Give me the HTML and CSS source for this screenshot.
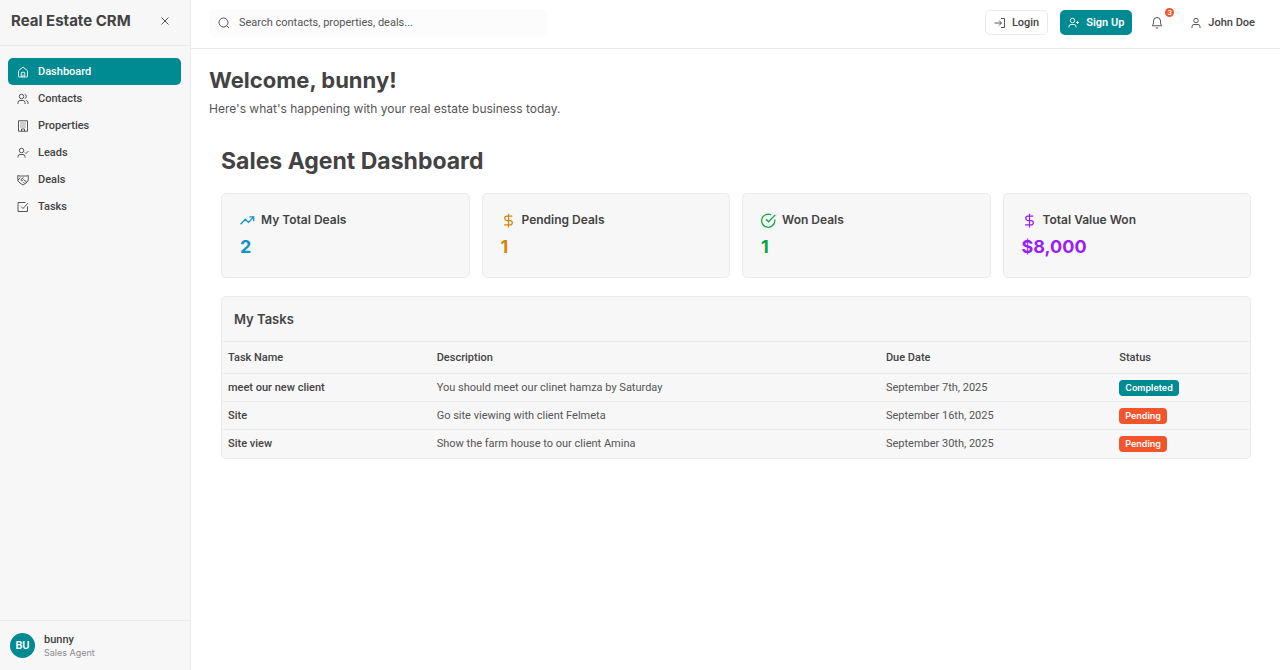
FILE: index.html
```html
<!DOCTYPE html>
<html lang="en">
<head>
<meta charset="utf-8">
<meta name="viewport" content="width=device-width, initial-scale=1">
<title>Real Estate CRM</title>
<link rel="stylesheet" href="styles.css">
</head>
<body>
<div class="app">
  <aside class="sidebar">
    <div class="brand">
      <span class="brand-name">Real Estate CRM</span>
      <button class="icon-button" type="button" aria-label="Close sidebar">
        <svg class="icon" viewBox="0 0 24 24"><path d="M19 5 5 19M5 5l14 14"/></svg>
      </button>
    </div>
    <nav class="nav">
      <a class="nav-link active" href="#"><svg class="icon" viewBox="0 0 24 24"><path d="M3 9.500 12 2l9 7.500V21a1 1 0 0 1-1 1H4a1 1 0 0 1-1-1z"/><path d="M8.500 22v-8a1.500 1.500 0 0 1 1.500-1.500h4a1.500 1.500 0 0 1 1.500 1.500v8M12 17v5"/></svg>Dashboard</a>
      <a class="nav-link" href="#"><svg class="icon" viewBox="0 0 24 24"><circle cx="9" cy="7" r="4.500"/><path d="M2 22v-3a4 4 0 0 1 4-4h6a4 4 0 0 1 4 4v3M15.500 2.700a4.500 4.500 0 0 1 0 8.600M18.500 15a4 4 0 0 1 3.500 4v3"/></svg>Contacts</a>
      <a class="nav-link" href="#"><svg class="icon" viewBox="0 0 24 24"><path d="M3 1.500h18v21H3zM9 22v-4h6v4M8 5v2M12 5v2M16 5v2M8 9v2M12 9v2M16 9v2M8 13v2M12 13v2M16 13v2"/></svg>Properties</a>
      <a class="nav-link" href="#"><svg class="icon" viewBox="0 0 24 24"><circle cx="9" cy="7" r="4.500"/><path d="M2 21v-2a4 4 0 0 1 4-4h6a4 4 0 0 1 4 4v2M16 11l2 2 5-5"/></svg>Leads</a>
      <a class="nav-link" href="#"><svg class="icon" viewBox="0 0 24 24"><path d="M12 22 4 16.500A7 7 0 0 1 1.500 11V3c3 1.500 6 1 10.500 1s7.500.500 10.500-1v8a7 7 0 0 1-2.500 5.500z"/><path d="M13 7 8.500 10.500a1.800 1.800 0 0 0 2.600 2.500l2-1.800 6.400 5M15.500 19l-3-3M2 12l5-5"/></svg>Deals</a>
      <a class="nav-link" href="#"><svg class="icon" viewBox="0 0 24 24"><path d="M21 11v10H2V3h15M8 11l4 4L22 4"/></svg>Tasks</a>
    </nav>
    <div class="account">
      <span class="avatar">BU</span>
      <div>
        <div class="account-name">bunny</div>
        <div class="account-role">Sales Agent</div>
      </div>
    </div>
  </aside>
  <div class="page">
    <header class="topbar">
      <label class="search">
        <svg class="icon" viewBox="0 0 24 24"><circle cx="11" cy="11" r="9"/><path d="m22 22-4.600-4.600"/></svg>
        <input class="search-input" type="text" aria-label="Search" placeholder="Search contacts, properties, deals...">
      </label>
      <div class="actions">
        <button class="button outline" type="button"><svg class="icon" viewBox="0 0 24 24"><path d="M14 3h7v18h-7M10 17l5-5-5-5M15 12H1"/></svg>Login</button>
        <button class="button primary" type="button"><svg class="icon" viewBox="0 0 24 24"><circle cx="9" cy="7" r="4.500"/><path d="M2 21v-2a4 4 0 0 1 4-4h6a4 4 0 0 1 4 4v2M19 8v6M16 11h6"/></svg>Sign Up</button>
        <button class="bell" type="button" aria-label="Notifications"><svg class="icon" viewBox="0 0 24 24"><path d="M2.500 17.500c1.500-1.400 2.500-3.400 2.500-9.500a7 7 0 0 1 14 0c0 6.100 1 8.100 2.500 9.500zM9.500 22h5"/></svg><span class="count">3</span></button>
        <button class="button profile" type="button"><svg class="icon" viewBox="0 0 24 24"><circle cx="12" cy="7" r="4.500"/><path d="M4 22v-3a4 4 0 0 1 4-4h8a4 4 0 0 1 4 4v3"/></svg>John Doe</button>
      </div>
    </header>
    <main class="content">
      <h1 class="title">Welcome, bunny!</h1>
      <p class="intro">Here's what's happening with your real estate business today.</p>
      <section class="dashboard">
        <h2 class="title section-title">Sales Agent Dashboard</h2>
        <div class="stats">
          <article class="card blue">
            <h3 class="stat-label"><svg class="icon" viewBox="0 0 24 24"><path d="M22 6l-8.500 9-5-5L1 18M15 6h7v7"/></svg>My Total Deals</h3>
            <p class="stat-value">2</p>
          </article>
          <article class="card amber">
            <h3 class="stat-label"><svg class="icon" viewBox="0 0 24 24"><path d="M12 1v22M18 5H9.500a3.500 3.500 0 0 0 0 7h5a3.500 3.500 0 0 1 0 7H5"/></svg>Pending Deals</h3>
            <p class="stat-value">1</p>
          </article>
          <article class="card green">
            <h3 class="stat-label"><svg class="icon" viewBox="0 0 24 24"><path d="M22 10.500v1.500a10.500 10.500 0 1 1-6-9.150M8 10l4 4L23 3"/></svg>Won Deals</h3>
            <p class="stat-value">1</p>
          </article>
          <article class="card purple">
            <h3 class="stat-label"><svg class="icon" viewBox="0 0 24 24"><path d="M12 1v22M18 5H9.500a3.500 3.500 0 0 0 0 7h5a3.500 3.500 0 0 1 0 7H5"/></svg>Total Value Won</h3>
            <p class="stat-value">$8,000</p>
          </article>
        </div>
        <section class="tasks">
          <h3 class="tasks-title">My Tasks</h3>
          <table class="table">
            <colgroup><col class="col-name"><col class="col-description"><col class="col-date"><col></colgroup>
            <thead><tr><th>Task Name</th><th>Description</th><th>Due Date</th><th>Status</th></tr></thead>
            <tbody>
              <tr><td class="name">meet our new client</td><td>You should meet our clinet hamza by Saturday</td><td>September 7th, 2025</td><td><span class="badge done">Completed</span></td></tr>
              <tr><td class="name">Site</td><td>Go site viewing with client Felmeta</td><td>September 16th, 2025</td><td><span class="badge">Pending</span></td></tr>
              <tr><td class="name">Site view</td><td>Show the farm house to our client Amina</td><td>September 30th, 2025</td><td><span class="badge">Pending</span></td></tr>
            </tbody>
          </table>
        </section>
      </section>
    </main>
  </div>
</div>
</body>
</html>
```

FILE: styles.css
```css
:root {
  --teal: #008a91;
  --orange: #f2552c;
  --ink: #434343;
  --text: #555555;
  --panel: #f7f7f7;
  --line: #ebebeb;
  --heading-font: Inter, "Liberation Sans", sans-serif;
}

* { box-sizing: border-box; }

body {
  margin: 0;
  background: #ffffff;
  color: var(--ink);
  font-family: Roboto, "Liberation Sans", sans-serif;
  font-size: 11px;
  line-height: 16px;
}

h1, h2, h3, p {
  margin: 0;
  font-family: var(--heading-font);
}

button, input {
  font: inherit;
  color: inherit;
}

button {
  padding: 0;
  border: 0;
  background: none;
}

.icon {
  width: 12px;
  height: 12px;
  flex: none;
  fill: none;
  stroke: currentColor;
  stroke-width: 1.8;
}

.app {
  display: flex;
  min-height: 100vh;
}

.sidebar {
  display: flex;
  flex-direction: column;
  flex: none;
  width: 191px;
  background: var(--panel);
  border-right: 1px solid var(--line);
}

.brand {
  display: flex;
  align-items: center;
  justify-content: space-between;
  height: 46px;
  padding: 0 19px 4px 11px;
  border-bottom: 1px solid var(--line);
}

.brand-name {
  font-family: var(--heading-font);
  font-size: 15px;
  font-weight: 700;
  line-height: 20px;
}

.icon-button { display: flex; }

.nav {
  flex: 1;
  padding: 12px 9px 12px 8px;
}

.nav-link {
  display: flex;
  align-items: center;
  gap: 9px;
  height: 27px;
  padding: 0 9px;
  border-radius: 5px;
  color: var(--ink);
  font-weight: 500;
  text-decoration: none;
}

.nav-link.active {
  background: var(--teal);
  color: #ffffff;
}

.account {
  display: flex;
  align-items: center;
  gap: 9px;
  height: 50px;
  padding: 0 10px;
  border-top: 1px solid var(--line);
}

.avatar {
  display: grid;
  place-items: center;
  width: 25px;
  height: 25px;
  border-radius: 50%;
  background: var(--teal);
  color: #ffffff;
  font-weight: 600;
}

.account-name {
  font-weight: 500;
  line-height: 14px;
}

.account-role {
  color: #8b8b8b;
  font-family: var(--heading-font);
  font-size: 9px;
  line-height: 12px;
}

.page {
  flex: 1;
  min-width: 0;
}

.topbar {
  display: flex;
  align-items: center;
  justify-content: space-between;
  height: 49px;
  padding: 0 17px 3px 18px;
  border-bottom: 1px solid var(--line);
}

.search {
  display: flex;
  align-items: center;
  gap: 9px;
  width: 338px;
  height: 28px;
  padding: 0 9px;
  border-radius: 5px;
  background: #fcfcfc;
}

.search-input {
  flex: 1;
  min-width: 0;
  padding: 0;
  border: 0;
  outline: 0;
  background: none;
}

.search-input::placeholder {
  color: var(--text);
  opacity: 1;
}

.actions {
  display: flex;
  align-items: center;
  gap: 12px;
}

.button {
  display: flex;
  align-items: center;
  gap: 6px;
  height: 25px;
  padding: 0 8px;
  border-radius: 5px;
  font-weight: 500;
}

.outline { border: 1px solid var(--line); }

.primary {
  background: var(--teal);
  color: #ffffff;
  font-weight: 600;
}

.bell {
  position: relative;
  display: grid;
  place-items: center;
  width: 26px;
  height: 26px;
}

.count {
  position: absolute;
  top: -2px;
  right: -4px;
  width: 9px;
  height: 9px;
  border-radius: 50%;
  background: var(--orange);
  color: #ffffff;
  font-size: 8px;
  font-weight: 500;
  line-height: 9px;
  text-align: center;
}

.content { padding: 16px 17px 16px 18px; }

.title {
  font-size: 22px;
  font-weight: 700;
  line-height: 30px;
}

.section-title { font-size: 23px; }

.intro {
  margin-top: 5px;
  color: var(--text);
  font-size: 12px;
  line-height: 18px;
}

.dashboard { padding: 28px 12px; }

.stats {
  display: grid;
  grid-template-columns: repeat(4, 1fr);
  gap: 12px;
  margin-top: 17px;
}

.card {
  min-height: 85px;
  padding: 17px 18px;
  border: 1px solid var(--line);
  border-radius: 5px;
  background: var(--panel);
}

.stat-label {
  display: flex;
  align-items: center;
  gap: 6px;
  color: var(--ink);
  font-size: 12px;
  font-weight: 600;
  line-height: 18px;
}

.stat-label .icon {
  width: 15px;
  height: 15px;
  color: var(--accent);
  stroke-width: 2;
}

.stat-value {
  margin-top: 6px;
  color: var(--accent);
  font-size: 18px;
  font-weight: 700;
  line-height: 24px;
}

.blue { --accent: #1094c2; }
.amber { --accent: #d58608; }
.green { --accent: #07a645; }
.purple { --accent: #9820f5; }

.tasks {
  margin-top: 18px;
  border: 1px solid var(--line);
  border-radius: 5px;
  background: var(--panel);
}

.tasks-title {
  padding: 12px;
  font-size: 13px;
  font-weight: 600;
  line-height: 20px;
}

.table {
  width: 100%;
  border-collapse: collapse;
  table-layout: fixed;
}

.col-name { width: 20.3%; }
.col-description { width: 43.7%; }
.col-date { width: 22.7%; }

.table th,
.table td {
  height: 28px;
  padding: 5px 6px;
  border-top: 1px solid var(--line);
  text-align: left;
  vertical-align: middle;
}

.table th {
  height: 32px;
  font-weight: 500;
}

.table td {
  color: var(--text);
}

.table .name {
  color: var(--ink);
  font-weight: 500;
}

.badge {
  display: block;
  width: fit-content;
  padding: 0 6px;
  border-radius: 4px;
  background: var(--orange);
  color: #ffffff;
  font-family: var(--heading-font);
  font-size: 9px;
  font-weight: 600;
  line-height: 16px;
}

.done { background: var(--teal); }
```
